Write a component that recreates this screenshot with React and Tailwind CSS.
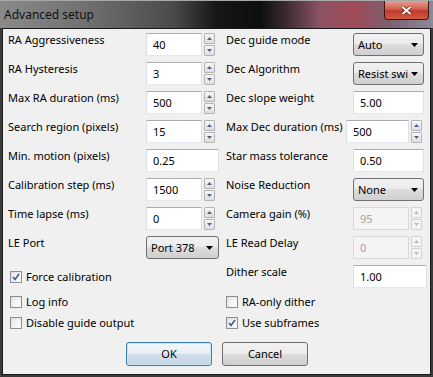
import React from 'react';

const FONT = "font-['Noto_Sans',sans-serif]";

function Spin({ disabled }) {
  const arrow = disabled ? '#b9bcc2' : '#4f6283';
  const btn = disabled
    ? 'border-[#d3d3d3] bg-[#f4f4f4]'
    : 'border-[#b4b4b4] bg-gradient-to-b from-[#f7f7f7] to-[#dfdfdf]';
  return (
    <div className="flex flex-col w-[11px] h-[23px] gap-[1px] ml-[2px]">
      <div className={`flex-1 flex items-center justify-center border rounded-[1px] ${btn}`}>
        <svg width="5" height="3" viewBox="0 0 5 3">
          <path d="M0 3 L2.5 0 L5 3Z" fill={arrow} />
        </svg>
      </div>
      <div className={`flex-1 flex items-center justify-center border rounded-[1px] ${btn}`}>
        <svg width="5" height="3" viewBox="0 0 5 3">
          <path d="M0 0 L2.5 3 L5 0Z" fill={arrow} />
        </svg>
      </div>
    </div>
  );
}

function TextBox({ value, w, disabled }) {
  return (
    <div
      className={`${w} h-[23px] flex items-center pl-[6px] pt-[1px] border ${
        disabled
          ? 'bg-[#f4f4f4] text-[#a3a3a3] border-[#d9d9d9]'
          : 'bg-white text-black border-t-[#abadb3] border-x-[#dbdfe6] border-b-[#e3e9ef]'
      }`}
    >
      {value}
    </div>
  );
}

function Combo({ value, w }) {
  return (
    <div
      className={`${w} h-[23px] flex items-center pl-[4px] pr-[5px] pt-[1px] rounded-[3px] border border-[#707070] bg-[linear-gradient(#f2f2f2_0%,#ebebeb_50%,#dddddd_50%,#cfcfcf_100%)]`}
    >
      <span className="flex-1 whitespace-nowrap">{value}</span>
      <svg width="7" height="4" viewBox="0 0 7 4" className="shrink-0">
        <path d="M0 0 L7 0 L3.5 4Z" fill="#000" />
      </svg>
    </div>
  );
}

function Check({ checked, label }) {
  return (
    <div className="flex items-center gap-[4px] whitespace-nowrap">
      <div className="w-[12px] h-[12px] border border-[#8e8f8f] bg-gradient-to-br from-[#dcdcdc] to-[#fbfbfb] p-[1px]">
        <div className="w-full h-full bg-gradient-to-br from-[#e6e8ec] to-[#ffffff] flex items-center justify-center">
          {checked && (
            <svg width="8" height="8" viewBox="0 0 8 8">
              <path d="M1 4 L3 6.5 L7 1" stroke="#3f5a92" strokeWidth="1.6" fill="none" />
            </svg>
          )}
        </div>
      </div>
      <span>{label}</span>
    </div>
  );
}

function Field({ f }) {
  if (f.type === 'spin')
    return (
      <div className="flex">
        <TextBox value={f.value} w={f.w} disabled={f.disabled} />
        <Spin disabled={f.disabled} />
      </div>
    );
  if (f.type === 'combo') return <Combo value={f.value} w={f.w} />;
  return <TextBox value={f.value} w={f.w} />;
}

const rows = [
  [
    ['RA Aggressiveness', { type: 'spin', value: '40', w: 'w-[56px]' }],
    ['Dec guide mode', { type: 'combo', value: 'Auto', w: 'w-[71px]' }],
  ],
  [
    ['RA Hysteresis', { type: 'spin', value: '3', w: 'w-[56px]' }],
    ['Dec Algorithm', { type: 'combo', value: 'Resist swi', w: 'w-[71px]' }],
  ],
  [
    ['Max RA duration (ms)', { type: 'spin', value: '500', w: 'w-[56px]' }],
    ['Dec slope weight', { type: 'text', value: '5.00', w: 'w-[71px]' }],
  ],
  [
    ['Search region (pixels)', { type: 'spin', value: '15', w: 'w-[56px]' }],
    ['Max Dec duration (ms)', { type: 'spin', value: '500', w: 'w-[63px]' }, true],
  ],
  [
    ['Min. motion (pixels)', { type: 'text', value: '0.25', w: 'w-[73px]' }],
    ['Star mass tolerance', { type: 'text', value: '0.50', w: 'w-[71px]' }],
  ],
  [
    ['Calibration step (ms)', { type: 'spin', value: '1500', w: 'w-[56px]' }],
    ['Noise Reduction', { type: 'combo', value: 'None', w: 'w-[71px]' }],
  ],
  [
    ['Time lapse (ms)', { type: 'spin', value: '0', w: 'w-[56px]' }],
    ['Camera gain (%)', { type: 'spin', value: '95', w: 'w-[56px]', disabled: true }],
  ],
  [
    ['LE Port', { type: 'combo', value: 'Port 378', w: 'w-[73px]' }],
    ['LE Read Delay', { type: 'spin', value: '0', w: 'w-[56px]', disabled: true }],
  ],
];

export default function App() {
  return (
    <div className={`${FONT} text-[11px] leading-[16px] w-[433px] h-[377px] bg-[#3b3b3b] flex flex-col overflow-hidden`}>
      {/* title bar */}
      <div className="h-[28px] shrink-0 flex items-start justify-between bg-[linear-gradient(90deg,#8a8a8a_0%,#707070_20%,#4a4a4a_40%,#161616_50%,#0e0e0e_60%,#3a2a30_66%,#8c5464_74%,#a04a58_82%,#7a6070_90%,#8a8a98_100%)] border-t border-[#a8a8a8]">
        <span className="mt-[6px] ml-[4px] text-[12px] text-[#111]">Advanced setup</span>
        <div className="mr-[4px] w-[45px] h-[19px] flex items-center justify-center rounded-b-[4px] border border-t-0 border-[#3c1410] bg-[linear-gradient(#e8a090_0%,#d06050_45%,#c0392b_55%,#d05a40_100%)]">
          <svg width="11" height="9" viewBox="0 0 11 9">
            <path d="M1.5 1 L9.5 8 M9.5 1 L1.5 8" stroke="#5a1a14" strokeWidth="3.2" />
            <path d="M1.5 1 L9.5 8 M9.5 1 L1.5 8" stroke="#fff" strokeWidth="2" />
          </svg>
        </div>
      </div>

      {/* client area */}
      <div className="mx-[2px] mb-[2px] flex-1 border border-[#1a1a1a] bg-[#f0f0f0] text-black flex flex-col pl-[5px] pt-[4px]">
        <div className="flex flex-col gap-[6px]">
          {rows.map(([left, right], i) => (
            <div key={i} className="flex h-[23px] whitespace-nowrap">
              <div className="w-[138px] -mt-[1px]">{left[0]}</div>
              <div className="w-[73px]">
                <Field f={left[1]} />
              </div>
              <div className="w-[7px]" />
              <div className={`${right[2] ? 'w-[120px]' : 'w-[127px]'} -mt-[1px]`}>{right[0]}</div>
              <div className={right[2] ? 'w-[78px]' : 'w-[71px]'}>
                <Field f={right[1]} />
              </div>
            </div>
          ))}
        </div>

        {/* checkboxes */}
        <div className="flex mt-[6px]">
          <div className="w-[218px] flex flex-col">
            <div className="h-[23px] flex items-center pl-[2px]">
              <Check checked label="Force calibration" />
            </div>
            <div className="mt-[6px] pl-[2px]">
              <Check label="Log info" />
            </div>
            <div className="mt-[5px] pl-[2px]">
              <Check label="Disable guide output" />
            </div>
          </div>
          <div className="flex flex-col">
            <div className="flex h-[23px]">
              <div className="w-[127px] -mt-[1px]">Dither scale</div>
              <TextBox value="1.00" w="w-[74px]" />
            </div>
            <div className="mt-[6px]">
              <Check label="RA-only dither" />
            </div>
            <div className="mt-[5px]">
              <Check checked label="Use subframes" />
            </div>
          </div>
        </div>

        {/* buttons */}
        <div className="flex mt-[11px] pl-[118px] gap-[10px]">
          <button className="w-[86px] h-[24px] rounded-[3px] border border-[#3c7fb1] bg-[linear-gradient(#f4f8fb_0%,#e6eef5_50%,#d3dfea_50%,#c8d6e3_100%)] shadow-[inset_0_0_0_1px_#c6e4f8]">
            OK
          </button>
          <button className="w-[86px] h-[24px] rounded-[3px] border border-[#707070] bg-[linear-gradient(#f2f2f2_0%,#ebebeb_50%,#dddddd_50%,#cfcfcf_100%)]">
            Cancel
          </button>
        </div>
      </div>
    </div>
  );
}
